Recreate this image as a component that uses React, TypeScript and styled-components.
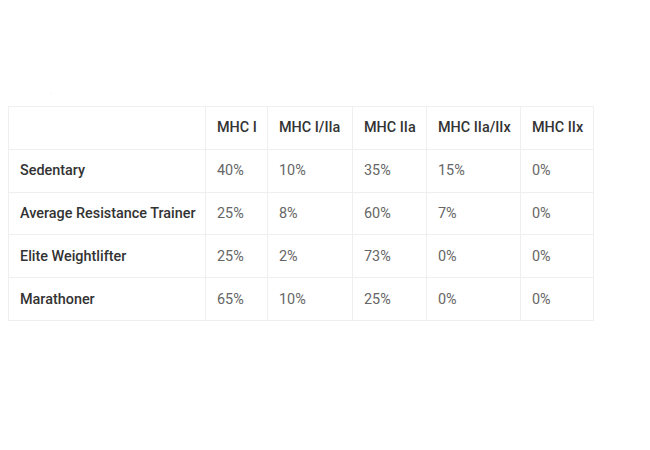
import React from "react";
import styled, { createGlobalStyle } from "styled-components";

const Global = createGlobalStyle`
  html, body { margin: 0; padding: 0; background: #ffffff; }
  body { font-family: Roboto, "Noto Sans", "Liberation Sans", sans-serif; }
`;

const Page = styled.div`
  width: 650px;
  height: 450px;
  padding: 88px 0 0 8px;
  box-sizing: border-box;
  background: #fff;
`;

const Caption = styled.div`
  height: 18px;
  padding-left: 42px;
  font-size: 6px;
  letter-spacing: 6px;
  color: #e4e4e4;
  line-height: 10px;
`;

const Table = styled.table`
  border-collapse: collapse;
  table-layout: fixed;
  width: 585px;
  font-size: 14.4px;
`;

const Cell = styled.td<{ $head?: boolean }>`
  border: 1px solid #efefef;
  height: 42.8px;
  padding: 0 11px;
  box-sizing: border-box;
  text-align: left;
  vertical-align: middle;
  white-space: nowrap;
  color: ${(p) => (p.$head ? "#333333" : "#666666")};
  font-weight: ${(p) => (p.$head ? 500 : 400)};
`;

const widths = [197, 62, 85, 74, 94, 73];
const headers = ["", "MHC I", "MHC I/IIa", "MHC IIa", "MHC IIa/IIx", "MHC IIx"];
const rows: string[][] = [
  ["Sedentary", "40%", "10%", "35%", "15%", "0%"],
  ["Average Resistance Trainer", "25%", "8%", "60%", "7%", "0%"],
  ["Elite Weightlifter", "25%", "2%", "73%", "0%", "0%"],
  ["Marathoner", "65%", "10%", "25%", "0%", "0%"],
];

export default function App() {
  return (
    <>
      <Global />
      <Page>
        <Caption>- · · ·</Caption>
        <Table>
          <colgroup>
            {widths.map((w, i) => (
              <col key={i} style={{ width: w }} />
            ))}
          </colgroup>
          <thead>
            <tr>
              {headers.map((h, i) => (
                <Cell as="th" key={i} $head>
                  {h}
                </Cell>
              ))}
            </tr>
          </thead>
          <tbody>
            {rows.map((r, ri) => (
              <tr key={ri}>
                {r.map((c, ci) => (
                  <Cell key={ci} $head={ci === 0}>
                    {c}
                  </Cell>
                ))}
              </tr>
            ))}
          </tbody>
        </Table>
      </Page>
    </>
  );
}
